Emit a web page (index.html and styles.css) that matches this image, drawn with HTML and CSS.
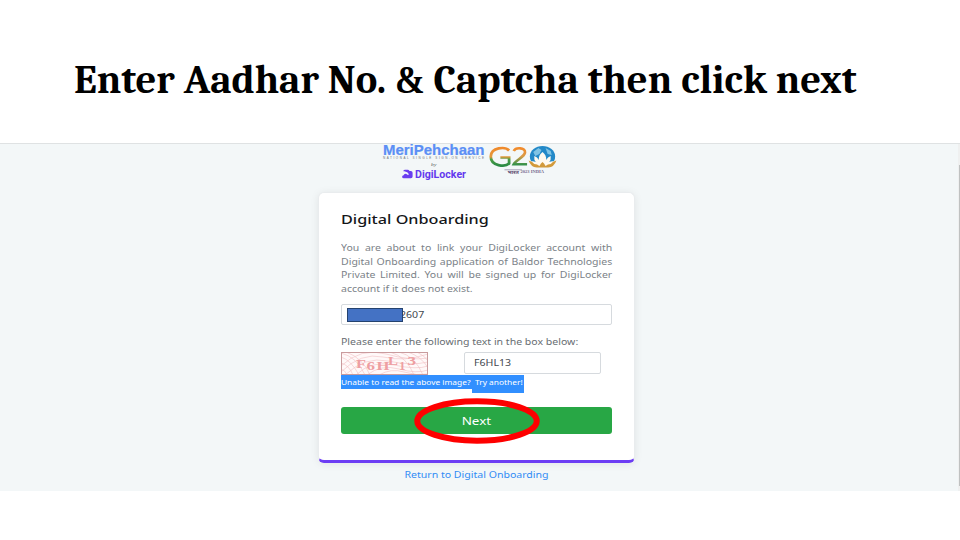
FILE: index.html
```html
<!DOCTYPE html>
<html lang="en">
<head>
<meta charset="utf-8">
<title>Digital Onboarding</title>
<link rel="stylesheet" href="styles.css">
</head>
<body>
<h1 class="slide-title"><span>Enter Aadhar No. <i class="amp">&amp;</i> Captcha then click next</span></h1>
<main class="screen">
  <div class="scrollbar"><i></i></div>
  <header class="logos">
    <div class="meri">
      <svg width="104" height="38" viewBox="0 0 104 38">
        <text class="meri-name" x="1" y="10.500" textLength="101.500" lengthAdjust="spacingAndGlyphs">MeriPehchaan</text>
        <text class="meri-tag" x="1" y="14.800" textLength="101" lengthAdjust="spacing">NATIONAL SINGLE SIGN-ON SERVICE</text>
        <text class="meri-by" x="49" y="22" textLength="5.500" lengthAdjust="spacingAndGlyphs">by</text>
        <path d="M21.300 27.300q0-1.500 1.500-1.500h3q1 0 1.700 1.200h1.300q1.800 0 1.800 1.700v3.800q0 1.700-1.700 1.700h-7q-1.800 0-1.800-1.500 0-1.300 1.500-1.500.4-1.500 1.900-1.500 1.200 0 1.700 1l2-.1q-1.400-2.800-4.900-3.300z" fill="#6a3df0"/>
        <text class="digi" x="33" y="33.500" textLength="51" lengthAdjust="spacingAndGlyphs">DigiLocker</text>
      </svg>
    </div>
    <svg class="g20" width="74" height="38" viewBox="0 0 72 38" preserveAspectRatio="none">
      <defs>
        <linearGradient id="g" x1="0" y1="0" x2="0" y2="1"><stop offset="0" stop-color="#f08a2c"/><stop offset=".5" stop-color="#e29a3c"/><stop offset=".65" stop-color="#4c9d45"/><stop offset="1" stop-color="#2c8b45"/></linearGradient>
        <linearGradient id="two" x1="0" y1="0" x2="0" y2="1"><stop offset="0" stop-color="#f28b2c"/><stop offset=".5" stop-color="#d99b48"/><stop offset="1" stop-color="#38924a"/></linearGradient>
      </defs>
      <path d="M21.500 6.500C18 2.500 4 3 3.700 12.500 3.500 22.500 18 23 21.500 19.500V13.500H13" fill="none" stroke="url(#g)" stroke-width="2.700"/>
      <path d="M26 7C28 3 37.500 3.500 37 8.500 36.500 13 28 16 26 20.300H39" fill="none" stroke="url(#two)" stroke-width="2.600"/>
      <ellipse cx="54" cy="12.500" rx="12.300" ry="10.500" fill="#2389c8"/>
      <path d="M45 8l5-4 3 2-2 4-4 2zM57 4l5 3 1 4-4-1z" fill="#7fc3e4"/>
      <path d="M54 8q4 3 3.500 8 1.500-3 4.500-4 .5 4-1.500 6 2.500-1 5-.5-2.500 4-7 4.500h-9q-4.500-.5-7-4.500 2.500-.5 5 .5-2-2-1.500-6 3 1 4.500 4-.5-5 3.500-8z" fill="#fffaf0"/>
      <path d="M40.500 16.500q3.500.5 5.500 3.500 3 .2 5 2 1.500-3 3-4 1.500 1 3 4 2-1.800 5-2 2-3 5.500-3.500-2 6.500-8 7h-11q-6-.5-8-7z" fill="#d29a3b"/>
      <path d="M17 25.800h17" stroke="#776b8e" stroke-width=".6"/>
      <text class="bharat" x="20" y="29.800" textLength="11" lengthAdjust="spacingAndGlyphs">भारत</text>
      <text class="g-year" x="32.500" y="29.500" textLength="23" lengthAdjust="spacingAndGlyphs">2023 INDIA</text>
    </svg>
  </header>
  <section class="card">
    <h2 class="stretch">Digital Onboarding</h2>
    <p class="intro"><span>You are about to link your DigiLocker account with</span><span>Digital Onboarding application of Baldor Technologies</span><span>Private Limited. You will be signed up for DigiLocker</span><span class="last">account if it does not exist.</span></p>
    <div class="field aadhaar"><b class="stretch">2607</b><i class="mask"></i></div>
    <p class="hint stretch">Please enter the following text in the box below:</p>
    <div class="captcha-row">
      <svg class="captcha" width="87" height="23" viewBox="0 0 87 23">
        <rect width="87" height="23" fill="#fff9f9"/>
        <g fill="none" stroke="#f2c0c2" stroke-width=".6">
          <path d="M0 20Q20 0 42 5T87 2M0 14Q20-5 45 2T87 6M4 23Q24 4 47 9T87 10M15 23Q30 8 53 13T87 14M26 23Q40 12 58 17T87 18M38 23Q50 16 63 20T87 22"/>
          <path d="M0 5Q10 8 18 23M0 1Q16 5 24 23M5 0Q22 6 29 23M0 11Q8 13 12 23M0 17Q4 18 6 23M49 0Q66 5 73 23M58 0Q74 4 82 23M67 0Q81 5 87 16M76 0Q84 4 87 9"/>
        </g>
        <g class="captcha-text"><text x="15" y="16" textLength="10" lengthAdjust="spacingAndGlyphs">F</text><text x="25.500" y="18" textLength="8.500" lengthAdjust="spacingAndGlyphs">6</text><text x="35.500" y="18" textLength="13" lengthAdjust="spacingAndGlyphs">H</text><text x="47" y="13" textLength="10" lengthAdjust="spacingAndGlyphs">L</text><text x="58" y="18">1</text><text x="66.500" y="13" textLength="8.500" lengthAdjust="spacingAndGlyphs">3</text></g>
        <rect x=".5" y=".5" width="86" height="22" fill="none" stroke="#c99b9d"/>
      </svg>
      <div class="field code"><b class="stretch">F6HL13</b></div>
    </div>
    <div class="retry"><div class="unable"><span class="stretch">Unable to read the above image?</span></div><div class="try"><span class="stretch">Try another!</span></div></div>
    <div class="next"><span>Next</span>
      <svg class="ring" width="126" height="46" viewBox="0 0 126 46"><ellipse cx="63" cy="23" rx="59.700" ry="19.700" fill="none" stroke="#fe0000" stroke-width="6"/></svg>
    </div>
  </section>
  <a class="return"><span>Return to Digital Onboarding</span></a>
</main>
</body>
</html>
```
FILE: styles.css
```css
* { box-sizing: border-box; }
body { margin: 0; width: 960px; height: 540px; overflow: hidden; background: #fff; font-family: "Noto Sans", "Open Sans", sans-serif; }
h1, h2, p { margin: 0; }
.slide-title { height: 143px; padding: 55px 0 0 74px; font: bold 40px/50px Cambria, Caladea, "Liberation Serif", serif; color: #000; white-space: nowrap; }
.slide-title span { display: inline-block; transform: scaleX(1.0156); transform-origin: 0 50%; }
.slide-title .amp { display: inline-block; width: 29px; font-family: "Liberation Serif", serif; font-style: normal; transform: scaleX(.88); transform-origin: 0 50%; line-height: 40px; }
.screen { position: relative; height: 348px; background: #f3f7f8; border-top: 1px solid #dfe2e3; }
.scrollbar { position: absolute; right: 0; top: 0; width: 2px; height: 347px; background: #eff0f0; }
.scrollbar i { display: block; width: 1px; height: 321px; margin: 21px 0 0 1px; background: #bfc1c1; }
.logos { display: flex; height: 48px; padding-left: 382px; }
.logos svg { display: block; overflow: visible; }
.g20 { margin-left: 1px; }
.meri-name { font: bold 14px "Liberation Sans", sans-serif; fill: #5b8ff5; stroke: #5b8ff5; stroke-width: .2; }
.meri-tag { font: 3px "Liberation Sans", sans-serif; fill: #6b7279; }
.meri-by { font: italic 5px "Liberation Serif", serif; fill: #555; }
.digi { font: bold 10px Roboto, sans-serif; fill: #6339ee; }
.bharat { font: bold 5px "Noto Sans", sans-serif; fill: #59466d; }
.g-year { font: bold 4px "Liberation Serif", serif; fill: #75698d; }
.card { width: 317px; height: 271px; margin-left: 318px; padding: 17px 22px 0; background: #fff; border: 1px solid #e9ecee; border-bottom: 3px solid #6c3df4; border-radius: 6px; box-shadow: 0 1px 8px rgba(0,0,0,.08); }
.stretch { display: block; width: max-content; transform: scaleX(1.2); transform-origin: 0 50%; white-space: nowrap; }
h2 { font-size: 13px; line-height: 19px; font-weight: 500; color: #141619; }
h2.stretch { transform: scaleX(1.245); }
.intro { width: 240px; margin-top: 12px; transform: scaleX(1.13); transform-origin: 0 50%; font-size: 9.300px; line-height: 13.500px; color: #7b8288; }
.intro span { display: block; white-space: nowrap; text-align-last: justify; }
.intro .last { text-align-last: left; }
.field { border: 1px solid #d6dade; border-radius: 2px; background: #fff; font-size: 9.300px; line-height: 19px; color: #43494f; }
.field b { font-weight: 400; }
.field .stretch { transform: scaleX(1.14); }
.aadhaar { position: relative; width: 271px; height: 21px; margin-top: 9px; padding-left: 58px; }
.mask { position: absolute; left: 5px; top: 3px; width: 56px; height: 14px; background: #4472c4; border: 1px solid #24426f; }
.hint { margin-top: 10px; font-size: 9.300px; line-height: 14px; color: #676d72; }
.hint.stretch { transform: scaleX(1.133); }
.captcha-row { display: flex; height: 23px; margin-top: 3px; }
.captcha-text { font: bold 13px "Liberation Serif", serif; fill: #ee9fa2; }
.code { width: 137px; height: 22px; margin-left: 36px; padding-left: 9px; line-height: 20px; }
.retry { display: flex; align-items: flex-start; font-size: 7.500px; line-height: 14px; color: #fff; }
.retry .stretch { transform: scaleX(1.115); }
.unable { width: 131px; height: 14px; background: #318fff; }
.try { width: 52px; height: 18px; padding-left: 3px; background: #318fff; }
.next { position: relative; width: 271px; height: 27px; margin-top: 14px; border-radius: 3px; background: #28a745; color: #fff; font-size: 11.300px; line-height: 27px; text-align: center; }
.next span { display: inline-block; transform: scaleX(1.19); }
.ring { position: absolute; left: 73px; top: -9px; }
.return { display: block; width: 317px; margin-left: 318px; padding-top: 4px; text-align: center; font-size: 9.300px; line-height: 15px; color: #318cf5; }
.return span { display: inline-block; transform: scaleX(1.135); }
```
